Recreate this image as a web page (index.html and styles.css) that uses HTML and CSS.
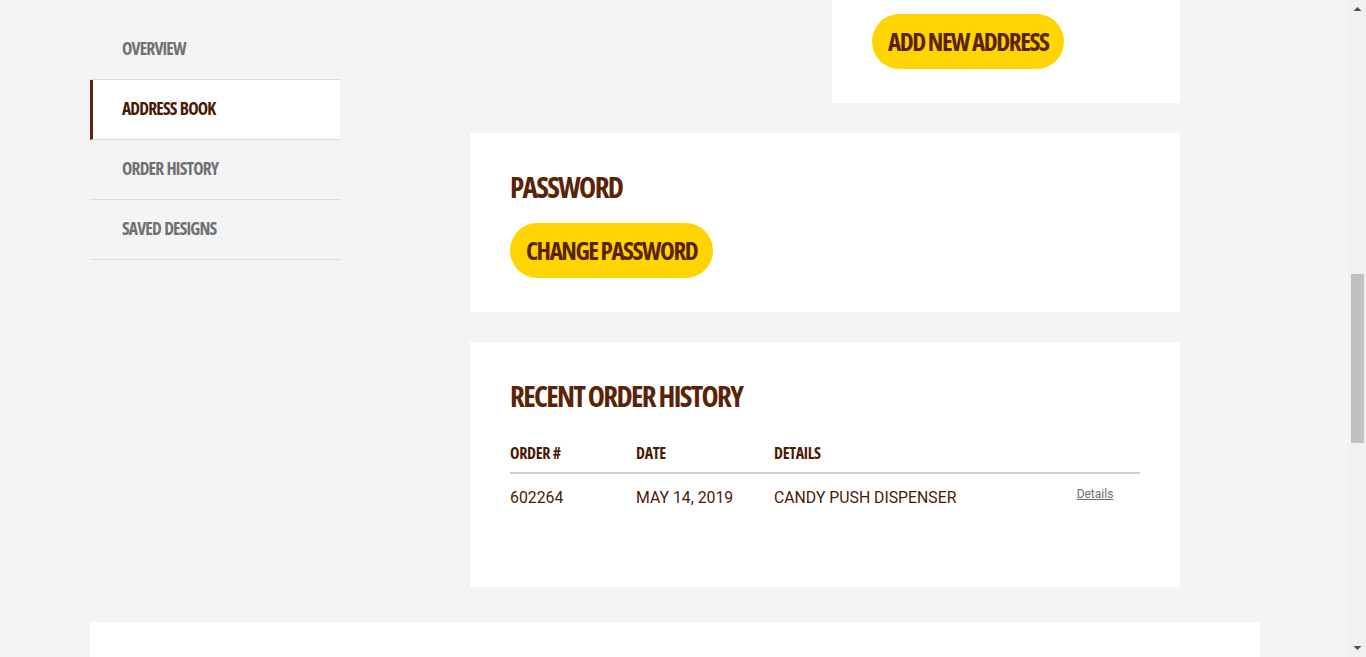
FILE: index.html
```html
<!DOCTYPE html>
<html lang="en">
<head>
<meta charset="utf-8">
<title>My Account</title>
<link rel="stylesheet" href="styles.css">
</head>
<body>
<div class="page">
  <main class="account">
    <aside class="sidebar">
      <nav class="account-nav">
        <a class="nav-item">OVERVIEW</a>
        <a class="nav-item is-active">ADDRESS BOOK</a>
        <a class="nav-item">ORDER HISTORY</a>
        <a class="nav-item">SAVED DESIGNS</a>
      </nav>
    </aside>

    <div class="content">
      <div class="address-row">
        <div class="card address-new">
          <button class="btn" type="button">ADD NEW ADDRESS</button>
        </div>
      </div>

      <section class="card password-card">
        <h2 class="card-title">PASSWORD</h2>
        <button class="btn" type="button">CHANGE PASSWORD</button>
      </section>

      <section class="card orders-card">
        <h2 class="card-title">RECENT ORDER HISTORY</h2>
        <table class="orders">
          <colgroup>
            <col class="col-order">
            <col class="col-date">
            <col>
            <col class="col-link">
          </colgroup>
          <thead>
            <tr><th>ORDER #</th><th>DATE</th><th>DETAILS</th><th></th></tr>
          </thead>
          <tbody>
            <tr>
              <td>602264</td>
              <td>MAY 14, 2019</td>
              <td>CANDY PUSH DISPENSER</td>
              <td class="link-cell"><a class="details-link">Details</a></td>
            </tr>
          </tbody>
        </table>
      </section>
    </div>
  </main>

  <section class="card promo"></section>
</div>

<div class="scrollbar" aria-hidden="true">
  <svg class="sb-arrow" width="17" height="17" viewBox="0 0 17 17"><polygon points="4.5,11 12.5,11 8.5,7" fill="#505050"/></svg>
  <div class="sb-thumb"></div>
  <svg class="sb-arrow sb-arrow-down" width="17" height="17" viewBox="0 0 17 17"><polygon points="4.5,6 12.5,6 8.5,10" fill="#505050"/></svg>
</div>
</body>
</html>
```

FILE: styles.css
```css
* { box-sizing: border-box; }

html, body {
  margin: 0;
  padding: 0;
}

body {
  background: #f4f4f4;
  font-family: "Roboto", "Liberation Sans", sans-serif;
  color: #5b2306;
  overflow: hidden;
  height: 657px;
}

.page {
  width: 1170px;
  margin-left: 90px;
}

/* condensed display face */
.nav-item,
.card-title,
.btn,
.orders th {
  font-family: "Open Sans", "Noto Sans", sans-serif;
  font-stretch: 75%;
  font-weight: 700;
}

/* account layout */
.account {
  display: grid;
  grid-template-columns: 250px 710px;
  column-gap: 130px;
  align-items: start;
}

.sidebar {
  margin-top: 20px;
}

.account-nav {
  display: flex;
  flex-direction: column;
}

.nav-item {
  display: flex;
  align-items: center;
  height: 60px;
  padding-left: 32px;
  padding-bottom: 3px;
  border-bottom: 1px solid #dcdcdc;
  font-size: 17.5px;
  letter-spacing: -0.85px;
  word-spacing: 1px;
  color: #707175;
  text-decoration: none;
}
.nav-item.is-active {
  background: #ffffff;
  border-left: 3px solid #5e2211;
  padding-left: 29px;
  color: #4a1a02;
}

.content {
  display: flex;
  flex-direction: column;
}

.card {
  background: #ffffff;
}

.address-row {
  display: flex;
  justify-content: flex-end;
}
.address-new {
  width: 348px;
  padding: 14px 40px 34px;
}

.card-title {
  margin: 0;
  font-size: 29px;
  line-height: 32px;
  letter-spacing: -1.65px;
  color: #5b2306;
}

.btn {
  display: block;
  height: 55px;
  padding: 0 16px 2px;
  border: none;
  border-radius: 28px;
  background: #ffd400;
  color: #5a2200;
  font-size: 25px;
  letter-spacing: -1.45px;
  cursor: pointer;
}

.password-card {
  margin-top: 30px;
  padding: 38px 40px 34px;
}
.password-card .btn { margin-top: 20px; }

.orders-card {
  margin-top: 30px;
  padding: 38px 40px 40px;
}

.orders {
  width: 630px;
  margin-top: 31px;
  margin-bottom: 26px;
  border-collapse: collapse;
  table-layout: fixed;
}
.col-order { width: 126px; }
.col-date { width: 138px; }
.col-link { width: 90px; }

.orders th {
  padding: 0 0 9px;
  border-bottom: 2px solid #cfcfcf;
  text-align: left;
  font-size: 16px;
  line-height: 20px;
  letter-spacing: -0.3px;
  color: #4a1a02;
}

.orders td {
  padding: 13px 0;
  font-size: 15.8px;
  line-height: 20px;
  color: #4a1a02;
  vertical-align: middle;
}
.orders td.link-cell { text-align: center; }

.details-link {
  font-size: 12px;
  color: #6d6e71;
  text-decoration: underline;
  position: relative;
  top: -4px;
}

.promo {
  margin-top: 35px;
  height: 35px;
}

/* scrollbar overlay */
.scrollbar {
  position: fixed;
  top: 0;
  right: 0;
  width: 17px;
  height: 657px;
  background: #f1f1f1;
}
.sb-arrow {
  display: block;
}
.sb-arrow-down {
  position: absolute;
  left: 0;
  bottom: 0;
}
.sb-thumb {
  position: absolute;
  left: 2px;
  top: 274px;
  width: 13px;
  height: 169px;
  background: #c1c1c1;
}
```
